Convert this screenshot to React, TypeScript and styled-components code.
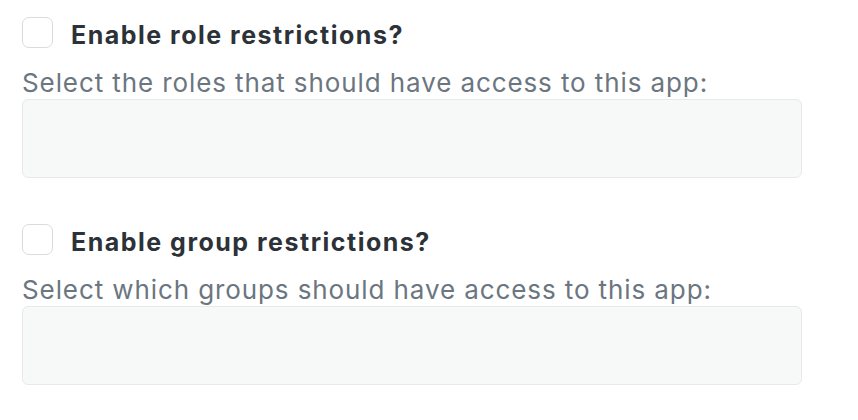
import React from "react";
import styled, { createGlobalStyle } from "styled-components";

const GlobalStyle = createGlobalStyle`
  html, body { margin: 0; padding: 0; background: #ffffff; }
  body { font-family: Inter, "Noto Sans", sans-serif; }
`;

const Page = styled.div`
  display: flex;
  flex-direction: column;
  gap: 46px;
  padding: 17px 56px 0 22px;
`;

const Section = styled.div`
  display: flex;
  flex-direction: column;
`;

const CheckRow = styled.label`
  display: flex;
  align-items: flex-start;
  gap: 18px;
  height: 31px;
  cursor: pointer;
`;

const Box = styled.span`
  box-sizing: border-box;
  width: 31px;
  height: 31px;
  border: 1.5px solid #d8dce0;
  border-radius: 7px;
  background: #ffffff;
  flex: none;
`;

const Label = styled.span`
  padding-top: 5px;
  font-size: 25px;
  line-height: 26px;
  font-weight: 700;
  color: #2c3238;
  letter-spacing: 1.5px;
  white-space: nowrap;
`;

const Description = styled.div`
  margin-top: 20px;
  font-size: 26px;
  line-height: 30px;
  color: #6b7680;
  letter-spacing: 0.9px;
  white-space: nowrap;
`;

const Field = styled.div`
  box-sizing: border-box;
  margin-top: 1px;
  height: 79px;
  background: #f7f8f8;
  border: 1.5px solid #e7e9eb;
  border-radius: 6px;
`;

function Restriction({ label, description }: { label: string; description: string }) {
  return (
    <Section>
      <CheckRow>
        <Box />
        <Label>{label}</Label>
      </CheckRow>
      <Description>{description}</Description>
      <Field />
    </Section>
  );
}

export default function App() {
  return (
    <>
      <GlobalStyle />
      <Page>
        <Restriction
          label="Enable role restrictions?"
          description="Select the roles that should have access to this app:"
        />
        <Restriction
          label="Enable group restrictions?"
          description="Select which groups should have access to this app:"
        />
      </Page>
    </>
  );
}
